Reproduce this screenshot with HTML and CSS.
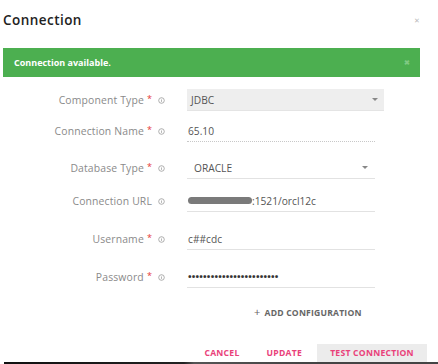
FILE: index.html
```html
<!DOCTYPE html>
<html>
<head>
<meta charset="utf-8">
<link rel="stylesheet" href="styles.css">
</head>
<body>
<div class="dialog">
  <div class="header">
    <div class="title">Connection</div>
    <div class="close">&#x2715;</div>
  </div>
  <div class="alert">
    <span>Connection available.</span>
    <span class="alert-close">&#x2716;</span>
  </div>
  <div class="form">
    <div class="row r1">
      <div class="label">Component Type<span class="req">*</span><svg class="info" viewBox="0 0 8 8"><circle cx="4" cy="4" r="3.2" fill="none" stroke="#999" stroke-width="0.9"/><rect x="3.6" y="3.4" width="0.8" height="2.2" fill="#999"/><rect x="3.6" y="2.2" width="0.8" height="0.7" fill="#999"/></svg></div>
      <div class="control select wide"><span>JDBC</span><span class="caret"></span></div>
    </div>
    <div class="row r2">
      <div class="label">Connection Name<span class="req">*</span><svg class="info" viewBox="0 0 8 8"><circle cx="4" cy="4" r="3.2" fill="none" stroke="#999" stroke-width="0.9"/><rect x="3.6" y="3.4" width="0.8" height="2.2" fill="#999"/><rect x="3.6" y="2.2" width="0.8" height="0.7" fill="#999"/></svg></div>
      <div class="control input dotted"><span>65.10</span></div>
    </div>
    <div class="row r3">
      <div class="label">Database Type<span class="req">*</span><svg class="info" viewBox="0 0 8 8"><circle cx="4" cy="4" r="3.2" fill="none" stroke="#999" stroke-width="0.9"/><rect x="3.6" y="3.4" width="0.8" height="2.2" fill="#999"/><rect x="3.6" y="2.2" width="0.8" height="0.7" fill="#999"/></svg></div>
      <div class="control input dd"><span>ORACLE</span><span class="caret"></span></div>
    </div>
    <div class="row r4">
      <div class="label">Connection URL<svg class="info" viewBox="0 0 8 8"><circle cx="4" cy="4" r="3.2" fill="none" stroke="#999" stroke-width="0.9"/><rect x="3.6" y="3.4" width="0.8" height="2.2" fill="#999"/><rect x="3.6" y="2.2" width="0.8" height="0.7" fill="#999"/></svg></div>
      <div class="control input url"><span class="blur"></span><span>:1521/orcl12c</span></div>
    </div>
    <div class="row r5">
      <div class="label">Username<span class="req">*</span><svg class="info" viewBox="0 0 8 8"><circle cx="4" cy="4" r="3.2" fill="none" stroke="#999" stroke-width="0.9"/><rect x="3.6" y="3.4" width="0.8" height="2.2" fill="#999"/><rect x="3.6" y="2.2" width="0.8" height="0.7" fill="#999"/></svg></div>
      <div class="control input"><span>c##cdc</span></div>
    </div>
    <div class="row r6">
      <div class="label">Password<span class="req">*</span><svg class="info" viewBox="0 0 8 8"><circle cx="4" cy="4" r="3.2" fill="none" stroke="#999" stroke-width="0.9"/><rect x="3.6" y="3.4" width="0.8" height="2.2" fill="#999"/><rect x="3.6" y="2.2" width="0.8" height="0.7" fill="#999"/></svg></div>
      <div class="control input"><span class="pw">&#x2022;&#x2022;&#x2022;&#x2022;&#x2022;&#x2022;&#x2022;&#x2022;&#x2022;&#x2022;&#x2022;&#x2022;&#x2022;&#x2022;&#x2022;&#x2022;&#x2022;&#x2022;&#x2022;&#x2022;&#x2022;&#x2022;&#x2022;&#x2022;</span></div>
    </div>
  </div>
  <div class="addconf"><span class="plus">+</span>ADD CONFIGURATION</div>
  <div class="buttons">
    <div class="btn cancel">CANCEL</div>
    <div class="btn update">UPDATE</div>
    <div class="btn test">TEST CONNECTION</div>
  </div>
</div>
<div class="taskbar"></div>
</body>
</html>
```
FILE: styles.css
```css
html, body {
  margin: 0;
  padding: 0;
  background: #fff;
  height: 364px;
  overflow: hidden;
  font-family: "Open Sans", "Noto Sans", sans-serif;
}
.dialog {
  position: relative;
  height: 362px;
  padding: 0 0 0 3px;
}
.header {
  display: flex;
  justify-content: space-between;
  align-items: center;
  height: 40px;
  padding-right: 18px;
}
.title {
  font-size: 13.5px;
  font-weight: 600;
  color: #222;
  letter-spacing: 0.45px;
}
.close {
  font-size: 7px;
  color: #bbb;
}
.alert {
  margin-top: 8px;
  width: 417px;
  height: 29px;
  background: #4caf50;
  display: flex;
  align-items: center;
  justify-content: space-between;
  box-sizing: border-box;
  padding: 0 10px 0 11px;
  color: #fff;
  font-size: 9px;
  font-weight: 700;
}
.alert-close {
  color: #7fc982;
  font-size: 7px;
}
.form {
  margin-top: 11px;
}
.row {
  display: flex;
  align-items: center;
  height: 24px;
}
.r2 { margin-top: 7px; }
.r3 { margin-top: 13px; }
.r4 { margin-top: 9px; }
.r5 { margin-top: 14px; }
.r6 { margin-top: 14px; }
.label {
  width: 162px;
  display: flex;
  justify-content: flex-end;
  align-items: center;
  font-size: 10.4px;
  color: #8a8a8a;
  letter-spacing: 0.15px;
}
.req {
  color: #e53935;
  font-size: 9px;
  margin-left: 3px;
  position: relative;
  top: -2px;
}
.info {
  width: 7px;
  height: 7px;
  margin-left: 6px;
}
.control {
  margin-left: 22px;
  box-sizing: border-box;
  height: 22px;
  width: 188px;
  display: flex;
  align-items: center;
  font-size: 10.2px;
  color: #555;
  position: relative;
}
.select.wide {
  width: 197px;
  background: #eee;
  padding-left: 4px;
  border-bottom: 1px solid #e4e4e4;
}
.input {
  border-bottom: 1px solid #e2e2e2;
  padding-left: 1px;
}
.input.dotted {
  border-bottom: 1px dotted #c8c8c8;
}
.dd { padding-left: 7px; }
.caret {
  position: absolute;
  right: 6px;
  top: 9px;
  width: 0;
  height: 0;
  border-left: 3px solid transparent;
  border-right: 3px solid transparent;
  border-top: 3px solid #888;
}
.dd .caret { right: 7px; }
.blur {
  display: inline-block;
  width: 64px;
  height: 7px;
  border-radius: 4px;
  background: #7a7a7a;
}
.pw {
  font-size: 9.5px;
  letter-spacing: 0.2px;
  color: #333;
  font-weight: 700;
}
.addconf {
  margin-top: 16px;
  margin-left: 251px;
  font-size: 8.6px;
  font-weight: 700;
  color: #666;
  letter-spacing: 0.2px;
  display: flex;
  align-items: center;
}
.plus {
  font-size: 11px;
  font-weight: 400;
  margin-right: 4px;
  position: relative;
  top: -1px;
}
.buttons {
  position: absolute;
  right: 11px;
  bottom: 0;
  display: flex;
  align-items: center;
  height: 18px;
}
.btn {
  font-size: 8.6px;
  font-weight: 700;
  color: #e9417a;
  letter-spacing: 0.25px;
  height: 18px;
  display: flex;
  align-items: center;
}
.cancel { margin-right: 27px; }
.update { margin-right: 15px; }
.test {
  background: #ececec;
  width: 110px;
  justify-content: center;
}
.taskbar {
  height: 2px;
  margin-left: 4px;
  background: linear-gradient(to right, #111 0, #222 180px, #555 190px, #444 300px);
}
```
